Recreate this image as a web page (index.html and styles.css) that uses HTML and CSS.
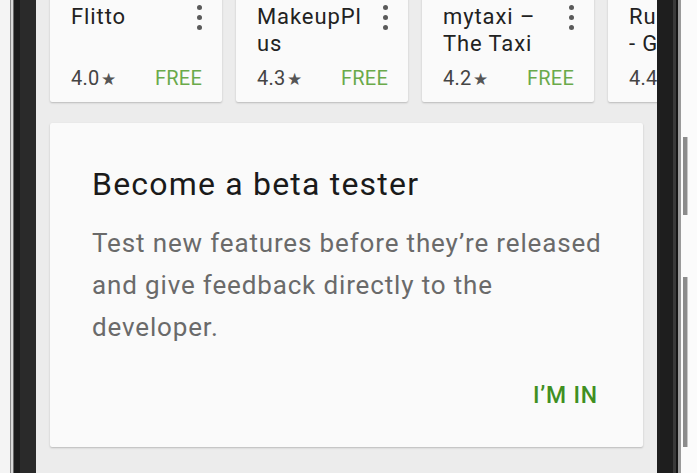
FILE: index.html
```html
<!DOCTYPE html>
<html>
<head>
<meta charset="utf-8">
<link rel="stylesheet" href="styles.css">
</head>
<body>
<div class="device">
  <div class="edge-left">
    <div class="s s-white"></div>
    <div class="s s-line1"></div>
    <div class="s s-light"></div>
    <div class="s s-line2"></div>
    <div class="s s-bezel-dark"></div>
    <div class="s s-bezel"></div>
  </div>
  <main class="screen">
    <div class="apps">
      <div class="app-card">
        <div class="app-head">
          <div class="app-name">Flitto</div>
          <div class="dots"><i></i><i></i><i></i></div>
        </div>
        <div class="app-foot"><span class="rating">4.0<span class="star">★</span></span><span class="price">FREE</span></div>
      </div>
      <div class="app-card">
        <div class="app-head">
          <div class="app-name">MakeupPl<br>us</div>
          <div class="dots"><i></i><i></i><i></i></div>
        </div>
        <div class="app-foot"><span class="rating">4.3<span class="star">★</span></span><span class="price">FREE</span></div>
      </div>
      <div class="app-card">
        <div class="app-head">
          <div class="app-name">mytaxi –<br>The Taxi</div>
          <div class="dots"><i></i><i></i><i></i></div>
        </div>
        <div class="app-foot"><span class="rating">4.2<span class="star">★</span></span><span class="price">FREE</span></div>
      </div>
      <div class="app-card">
        <div class="app-head">
          <div class="app-name">Runtastic<br>- GPS</div>
          <div class="dots"><i></i><i></i><i></i></div>
        </div>
        <div class="app-foot"><span class="rating">4.4<span class="star">★</span></span><span class="price">FREE</span></div>
      </div>
    </div>
    <section class="beta">
      <h1 class="beta-title">Become a beta tester</h1>
      <p class="beta-text">Test new features before they’re released<br>and give feedback directly to the<br>developer.</p>
      <div class="beta-actions"><span class="beta-btn">I’M IN</span></div>
    </section>
  </main>
  <div class="edge-right">
    <div class="s s-bezel-r"></div>
    <div class="s s-rline1"></div>
    <div class="s s-rline2"></div>
    <div class="s s-rline3"></div>
    <div class="s s-rwhite"></div>
    <div class="btn btn-1"></div>
    <div class="btn btn-2"></div>
  </div>
</div>
</body>
</html>
```
FILE: styles.css
```css
* { box-sizing: border-box; }
html, body { margin: 0; padding: 0; }
body {
  width: 697px;
  height: 473px;
  overflow: hidden;
  background: #f6f6f6;
  font-family: Roboto, "Noto Sans", sans-serif;
}
.device {
  display: flex;
  height: 473px;
}
.edge-left, .edge-right {
  display: flex;
  height: 100%;
  flex: none;
}
.edge-right { position: relative; }
.s { height: 100%; flex: none; }
.s-white { width: 10px; background: #f4f4f4; }
.s-line1 { width: 1px; background: #8a8a8a; }
.s-light { width: 2px; background: #d8d8d8; }
.s-line2 { width: 1px; background: #6a6a6a; }
.s-bezel-dark { width: 6px; background: #1c1c1c; }
.s-bezel { width: 16px; background: #2a2a2a; }

.s-bezel-r { width: 16px; background: #1e1e1e; }
.s-rline1 { width: 3px; background: #3a3a3a; }
.s-rline2 { width: 2px; background: #151515; }
.s-rline3 { width: 3px; background: #9a9a9a; }
.s-rwhite { width: 16px; background: #fbfbfb; }
.btn {
  position: absolute;
  left: 26px;
  width: 5px;
  background: #8c8c8c;
  border-right: 1px solid #c8c8c8;
}
.btn-1 { top: 137px; height: 78px; }
.btn-2 { top: 277px; height: 170px; }

.screen {
  width: 621px;
  flex: none;
  background: #ececec;
  overflow: hidden;
  padding: 0 14px;
}
.apps {
  display: flex;
  gap: 14px;
  margin-top: -12px;
}
.app-card {
  flex: none;
  width: 172px;
  height: 114px;
  background: #fafafa;
  border-radius: 2px;
  box-shadow: 0 1px 2px rgba(0,0,0,0.22);
  padding: 15px 16px 0 21px;
  display: flex;
  flex-direction: column;
}
.app-head {
  display: flex;
  justify-content: space-between;
  height: 62px;
}
.app-name {
  font-size: 22px;
  letter-spacing: 0.9px;
  line-height: 27px;
  color: #222;
  white-space: nowrap;
  overflow: hidden;
}
.dots {
  display: flex;
  flex-direction: column;
  gap: 5px;
  padding-top: 2px;
  padding-right: 4px;
}
.dots i {
  display: block;
  width: 5px;
  height: 5px;
  border-radius: 50%;
  background: #5a5a5a;
}
.app-foot {
  display: flex;
  justify-content: space-between;
  align-items: baseline;
  font-size: 20px;
  letter-spacing: 0.2px;
  line-height: 24px;
  padding-right: 4px;
  margin-top: 1px;
}
.rating { color: #444; }
.star { font-size: 17px; color: #555; margin-left: 2px; }
.price { color: #6aaa4a; }

.beta {
  margin-top: 21px;
  height: 324px;
  background: #fafafa;
  border-radius: 2px;
  box-shadow: 0 1px 2px rgba(0,0,0,0.22);
  padding: 42px 30px 0 42px;
  display: flex;
  flex-direction: column;
}
.beta-title {
  margin: 0;
  font-size: 32px;
  letter-spacing: 1.2px;
  font-weight: 400;
  line-height: 38px;
  color: #1a1a1a;
  white-space: nowrap;
}
.beta-text {
  margin: 19px 0 0 0;
  font-size: 26px;
  letter-spacing: 0.85px;
  line-height: 42px;
  color: #6a6a6a;
  white-space: nowrap;
}
.beta-actions {
  display: flex;
  justify-content: flex-end;
  margin-top: 34px;
  padding-right: 15px;
}
.beta-btn {
  font-size: 23px;
  font-weight: 500;
  letter-spacing: 0.8px;
  color: #3f8f22;
}
```
